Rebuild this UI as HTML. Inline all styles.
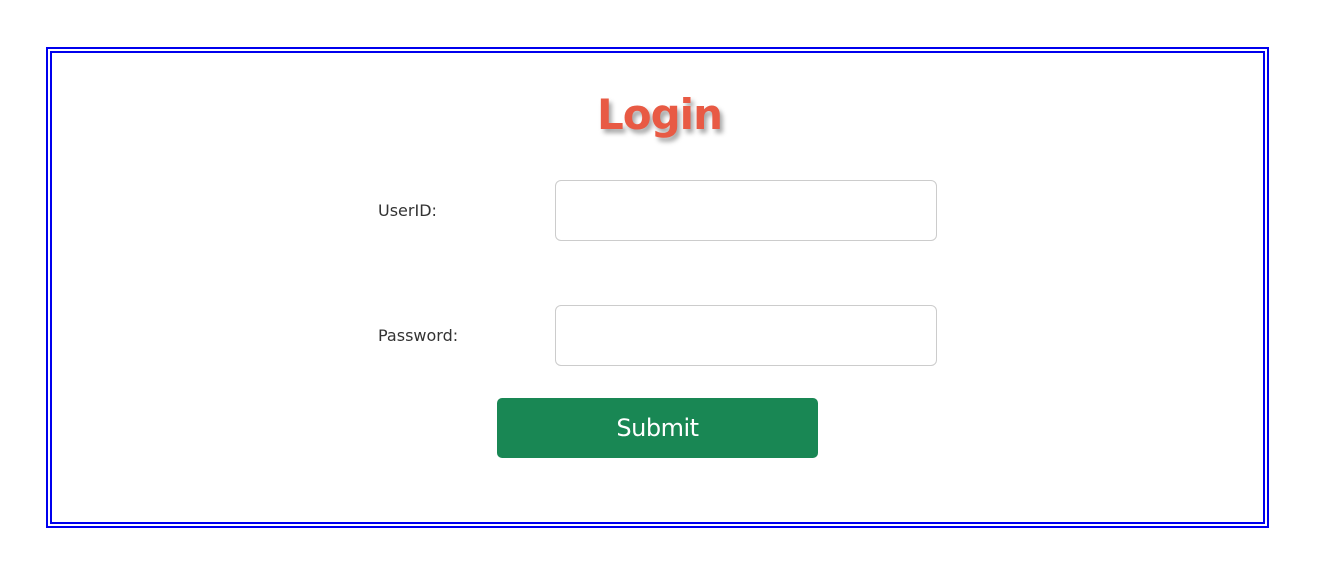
<!DOCTYPE html>
<html><head><style>
body{margin:0;width:1324px;height:584px;background:#fff;font-family:"DejaVu Sans","Liberation Sans",sans-serif;position:relative;overflow:hidden}
.box{position:absolute;left:46px;top:47px;width:1211px;height:469px;border:6px double #0000ee}
h1{position:absolute;left:597px;top:90px;margin:0;font-size:42px;font-weight:bold;color:#e85a44;text-shadow:3px 4px 5px rgba(0,0,0,.35);letter-spacing:-1px}
.lbl{position:absolute;left:378px;font-size:16px;color:#333}
.inp{position:absolute;left:555px;border:1px solid #ccc;border-radius:6px;box-sizing:border-box;width:382px;height:61px}
.btn{position:absolute;left:497px;top:398px;width:321px;height:60px;background:#198754;border-radius:5px;color:#fff;font-size:24px;text-align:center;line-height:60px;letter-spacing:-0.5px}
</style></head><body>
<div class="box"></div>
<h1>Login</h1>
<div class="lbl" style="top:201px">UserID:</div>
<div class="inp" style="top:180px"></div>
<div class="lbl" style="top:326px">Password:</div>
<div class="inp" style="top:305px"></div>
<div class="btn">Submit</div>
</body></html>
